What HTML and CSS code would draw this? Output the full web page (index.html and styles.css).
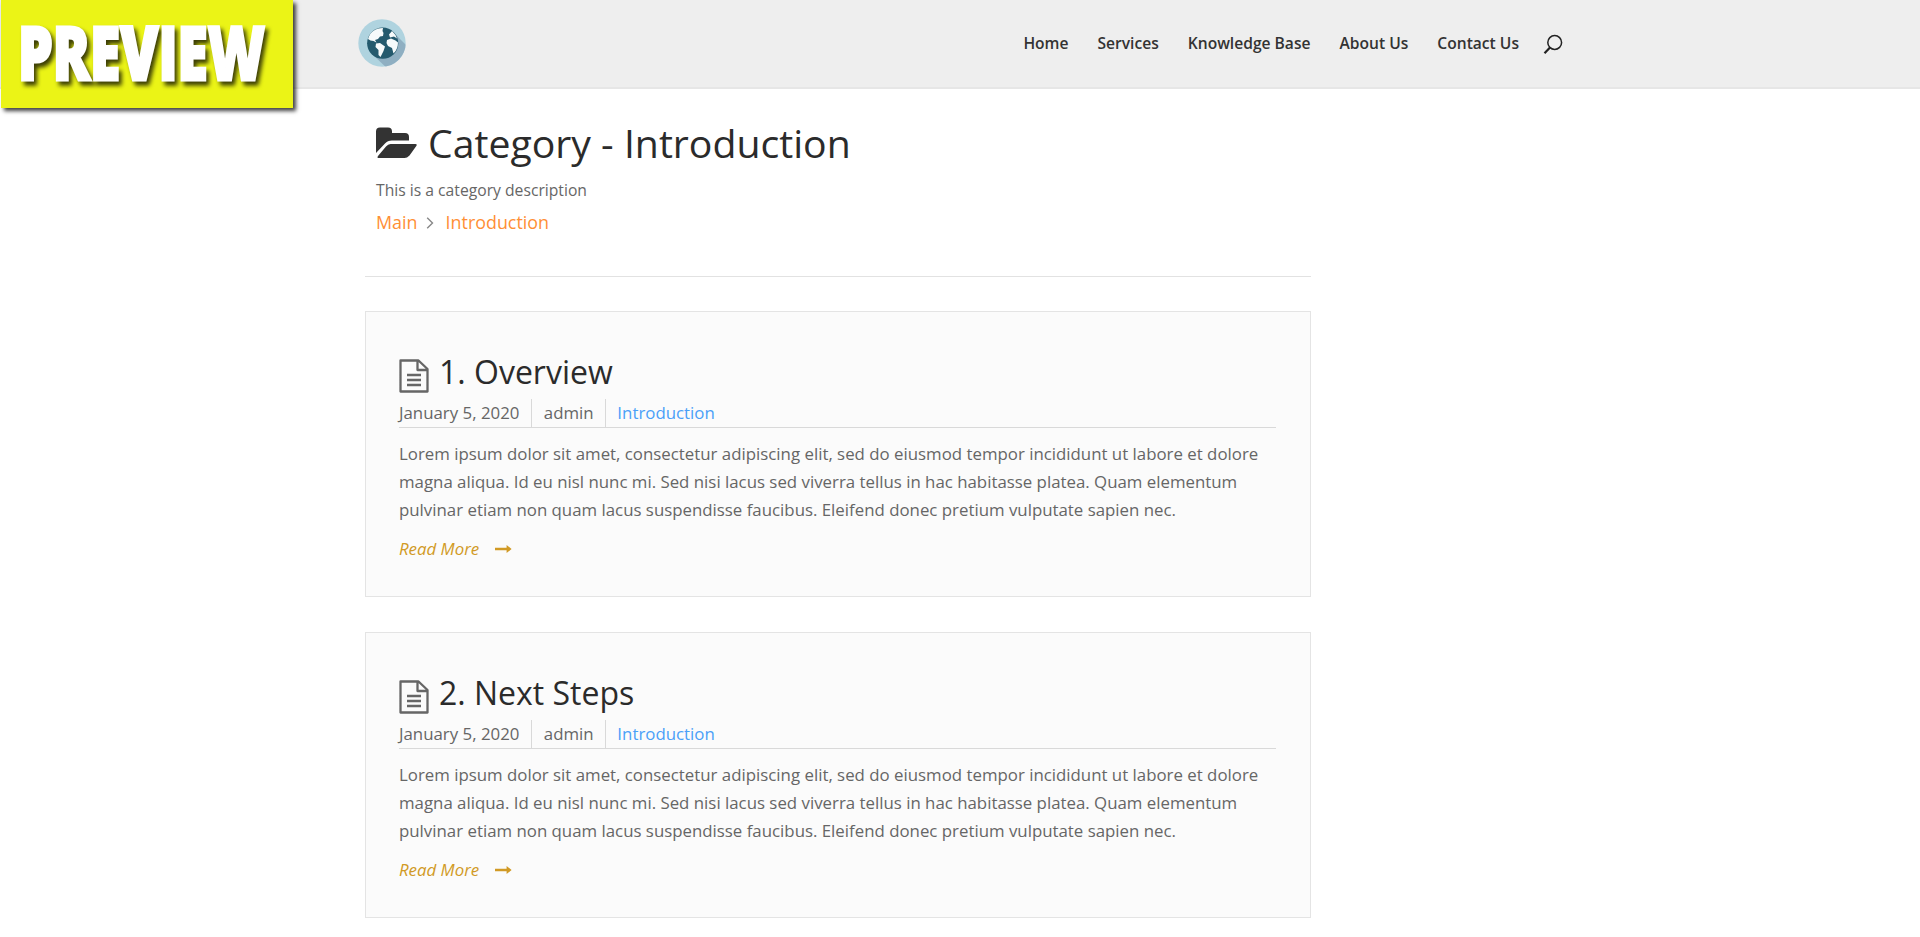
FILE: index.html
```html
<!DOCTYPE html>
<html lang="en">
<head>
<meta charset="utf-8">
<title>Category - Introduction</title>
<link rel="stylesheet" href="styles.css">
</head>
<body>
<svg class="defs" width="0" height="0" aria-hidden="true">
  <symbol id="doc" viewBox="0 0 30 34">
    <path d="M1.5 1.5H19.5L28.5 10V32.5H1.5ZM18.5 1.5V11H28.5M8 16H22M8 21H22M8 26H22" fill="none" stroke="currentColor" stroke-width="2.3" stroke-linejoin="round"/>
  </symbol>
  <symbol id="arrow" viewBox="0 0 17 10">
    <path d="M0 3.8H11.6V1L16.6 5L11.6 9V6.2H0Z" fill="currentColor"/>
  </symbol>
</svg>
<header class="header">
  <a class="logo" href="#">
    <svg width="48" height="48" viewBox="0 0 48 48">
      <defs><clipPath id="disc"><circle cx="24" cy="24" r="23.7"/></clipPath></defs>
      <circle cx="24" cy="24" r="23.7" fill="#afd3df"/>
      <path clip-path="url(#disc)" d="M35 13L52 30V52H32L14 35Z" fill="#8fafc2"/>
      <circle cx="24.7" cy="24.2" r="15.6" fill="#245a6e"/>
      <path d="M10 20C12 13 17 9.300 25 9L24.500 12L25.500 14L25 17L22 17.500L20 20L17 21L18.500 23.500L15.500 22L12.500 21.500ZM18 24.500L22 24L27 27.500L25.500 32L22.500 38L20.500 36L20.500 31L17.500 28ZM31 15.500L34 12L37.500 16L39 19.500L36 17.500L32 18.500ZM29 21L33 19.500L37.500 21.500L40 23.500C40 28 38.500 31.500 35.500 34.500L34 29L30 27L28.500 24Z" fill="#f6fafb"/>
    </svg>
  </a>
  <nav class="nav">
    <a href="#">Home</a>
    <a href="#">Services</a>
    <a href="#">Knowledge Base</a>
    <a href="#">About Us</a>
    <a href="#">Contact Us</a>
    <svg class="search" width="20" height="21" viewBox="0 0 20 21"><circle cx="11.700" cy="8.500" r="6.900" fill="none" stroke="#222" stroke-width="1.500"/><path d="M7 13.500L1.500 19.200" stroke="#222" stroke-width="2.200"/></svg>
  </nav>
</header>
<div class="ribbon">
  <svg class="ribbon-art" width="292" height="108" viewBox="0 0 292 108"><text class="ribbon-text" x="17" y="79.500" textLength="247" lengthAdjust="spacingAndGlyphs">PREVIEW</text></svg>
</div>
<main class="main">
  <section class="intro">
    <h1 class="title">
      <svg width="42" height="32" viewBox="0 0 42 32"><path d="M0 26V4.500Q0 .5 4 .5H12Q16 .5 16 4.500V6H29Q33 6 33 10V13.500H16Q11.500 13.500 9 16.500Z" fill="#333"/><path d="M14.500 17H39.500Q41.500 17 40.300 19L33.500 28.500Q31 31 28.500 31H3Q.5 31 2 29L10 19.500Q12 17 14.500 17Z" fill="#333"/></svg>
      <span>Category - Introduction</span>
    </h1>
    <p class="desc">This is a category description</p>
    <div class="crumbs">
      <a href="#">Main</a>
      <svg width="8" height="12" viewBox="0 0 8 12"><path d="M1.200 .8L6.500 6L1.200 11.200" fill="none" stroke="#888" stroke-width="1.400"/></svg>
      <a href="#">Introduction</a>
    </div>
  </section>
  <article class="card">
    <h2 class="card-title"><svg width="30" height="34"><use href="#doc"/></svg><span>1. Overview</span></h2>
    <div class="meta"><span>January 5, 2020</span><span>admin</span><a href="#">Introduction</a></div>
    <p class="text">Lorem ipsum dolor sit amet, consectetur adipiscing elit, sed do eiusmod tempor incididunt ut labore et dolore<br>magna aliqua. Id eu nisl nunc mi. Sed nisi lacus sed viverra tellus in hac habitasse platea. Quam elementum<br>pulvinar etiam non quam lacus suspendisse faucibus. Eleifend donec pretium vulputate sapien nec.</p>
    <a class="more" href="#"><span>Read More</span><svg width="17" height="10"><use href="#arrow"/></svg></a>
  </article>
  <article class="card">
    <h2 class="card-title"><svg width="30" height="34"><use href="#doc"/></svg><span>2. Next Steps</span></h2>
    <div class="meta"><span>January 5, 2020</span><span>admin</span><a href="#">Introduction</a></div>
    <p class="text">Lorem ipsum dolor sit amet, consectetur adipiscing elit, sed do eiusmod tempor incididunt ut labore et dolore<br>magna aliqua. Id eu nisl nunc mi. Sed nisi lacus sed viverra tellus in hac habitasse platea. Quam elementum<br>pulvinar etiam non quam lacus suspendisse faucibus. Eleifend donec pretium vulputate sapien nec.</p>
    <a class="more" href="#"><span>Read More</span><svg width="17" height="10"><use href="#arrow"/></svg></a>
  </article>
</main>
</body>
</html>
```
FILE: styles.css
```css
* { box-sizing: border-box; }
body { margin: 0; background: #fff; color: #666; font-family: "Open Sans", sans-serif; font-size: 16.83px; }
a { text-decoration: none; color: inherit; }
h1, h2, p { margin: 0; font-weight: 400; }
svg { display: block; flex: none; }
.defs { position: absolute; }
.header { display: flex; justify-content: space-between; align-items: flex-start; height: 89px; padding: 19px 357px 0 358px; background: #eee; border-bottom: 2px solid #e6e6e6; }
.nav { display: flex; align-items: center; gap: 29px; height: 47px; color: #333; font-weight: 600; font-size: 15.6px; line-height: 24px; white-space: nowrap; }
.search { margin: 3px 0 0 -5px; }
.ribbon { position: absolute; left: 1px; top: 0; width: 292px; height: 108px; background: #ebf416; box-shadow: 3px 3px 4px rgba(0, 0, 0, .75); }
.ribbon-art { overflow: visible; }
.ribbon-text { font: 800 74px "Open Sans", sans-serif; fill: #fff; stroke: #fff; stroke-width: 3px; filter: drop-shadow(3px 4px 2px rgba(0, 0, 0, .75)); }
.main { width: 946px; margin-left: 365px; }
.intro { height: 188px; padding: 28px 11px 0; border-bottom: 1px solid #e2e2e2; }
.title { display: flex; align-items: center; gap: 10px; height: 52px; color: #2b2b2b; font-size: 39.2px; line-height: 52px; }
.desc { margin-top: 9px; font-size: 15.7px; line-height: 24px; }
.crumbs { display: flex; align-items: center; gap: 9px; margin-top: 7px; font-size: 17.9px; line-height: 26px; color: #ff8f35; }
.crumbs svg { margin: 2px 3px 0 -1px; }
.card { height: 286px; margin-top: 34px; padding: 39px 34px 0 33px; border: 1px solid #e4e4e4; background: #fbfbfb; }
.card + .card { margin-top: 35px; }
.card-title { display: flex; align-items: center; gap: 10px; height: 44px; color: #2b2b2b; font-size: 32px; line-height: 44px; }
.card-title svg { margin-top: 6px; color: #666; }
.card-title span { margin-top: -2px; }
.meta { display: flex; height: 33px; padding-top: 4px; border-bottom: 1px solid #d9d9d9; line-height: 28px; }
.meta > * { padding: 0 11.4px; }
.meta > :first-child { padding: 0 12px 0 0; }
.meta > span { border-right: 1px solid #d9d9d9; }
.meta a { color: #4aa0f8; }
.text { margin-top: 12px; line-height: 28px; white-space: nowrap; }
.more { display: flex; align-items: center; gap: 16px; margin-top: 12px; line-height: 26px; font-style: italic; color: #d19a25; }
```
